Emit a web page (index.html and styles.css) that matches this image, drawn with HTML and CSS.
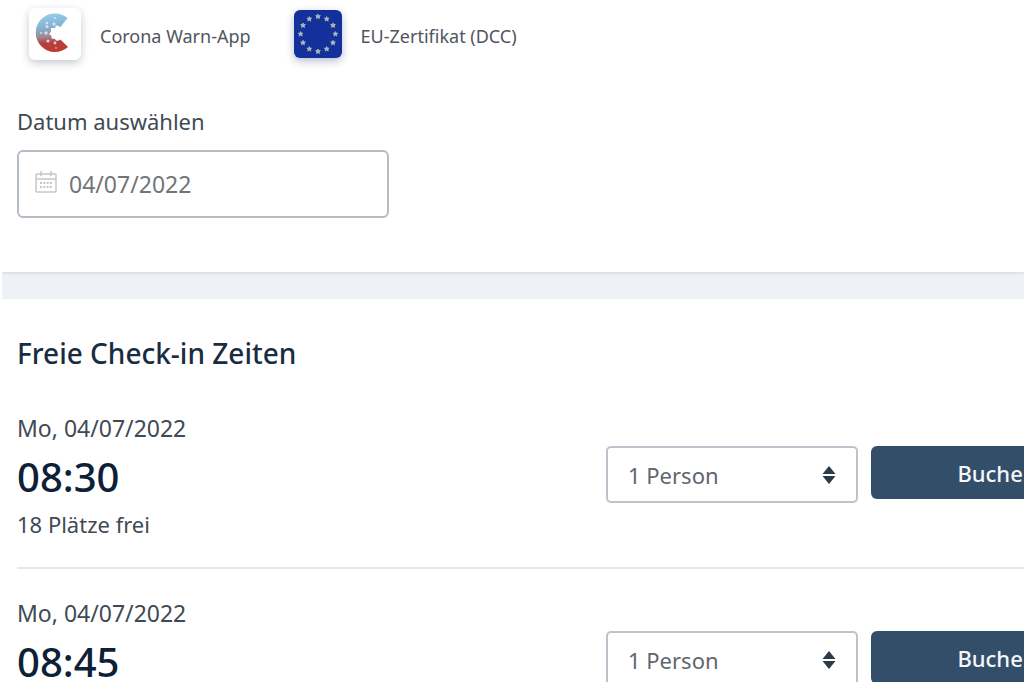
FILE: index.html
```html
<!DOCTYPE html>
<html lang="de">
<head>
<meta charset="utf-8">
<meta name="viewport" content="width=device-width, initial-scale=1">
<title>Freie Check-in Zeiten</title>
<link rel="stylesheet" href="styles.css">
</head>
<body>
<main class="page">
  <section class="panel intro">
    <ul class="features">
      <li class="feature">
        <span class="feature-icon feature-icon-cwa">
          <svg viewBox="0 0 52 52" aria-hidden="true">
            <defs>
              <linearGradient id="cwa" x1="0.300" y1="0" x2="0.400" y2="1">
                <stop offset="0" stop-color="#93cfe8"/>
                <stop offset="0.35" stop-color="#86b4d4"/>
                <stop offset="0.6" stop-color="#a08498"/>
                <stop offset="0.76" stop-color="#b5403c"/>
                <stop offset="1" stop-color="#c0392f"/>
              </linearGradient>
            </defs>
            <path fill="url(#cwa)" d="M38.500 10 A19.300 19.300 0 1 0 39 39 L31.500 31.500 Q30 33 27 32.500 L26 31 L22.500 30.500 L22.500 28 L20 26 L22 23.500 L22 20 L26 20 L27 17.500 Q30 17.500 31.500 19 Z"/>
            <g fill="#e8f2f8" opacity="0.8">
              <circle cx="26" cy="10" r="1"/><circle cx="18" cy="15" r="1.200"/><circle cx="25" cy="16" r="1.600"/>
              <circle cx="12" cy="25" r="1"/><circle cx="18" cy="18.500" r="1.500"/><circle cx="17" cy="25" r="1.700"/><circle cx="19" cy="33" r="1.600"/>
              <circle cx="26" cy="35" r="1.400"/><circle cx="27" cy="40" r="0.800"/>
            </g>
          </svg>
        </span>
        <span class="feature-name">Corona Warn-App</span>
      </li>
      <li class="feature">
        <span class="feature-icon feature-icon-eu">
          <svg viewBox="0 0 48 48" aria-hidden="true">
            <defs><path id="star" fill="#b4bdb8" stroke="#b4bdb8" stroke-width="0.800" stroke-linejoin="round" d="M0-2.400 .7-.8 2.400-.8 1.100.4 1.500 2.100 0 1.100-1.500 2.100-1.100.4-2.400-.8-.7-.8Z"/></defs>
            <use href="#star" x="24" y="6.500"/><use href="#star" x="32.700" y="9"/><use href="#star" x="39" y="15.300"/>
            <use href="#star" x="41.400" y="24"/><use href="#star" x="39" y="32.700"/><use href="#star" x="32.700" y="39"/>
            <use href="#star" x="24" y="41.400"/><use href="#star" x="15.300" y="39"/><use href="#star" x="9" y="32.700"/>
            <use href="#star" x="6.600" y="24"/><use href="#star" x="9" y="15.300"/><use href="#star" x="15.300" y="9"/>
          </svg>
        </span>
        <span class="feature-name">EU-Zertifikat (DCC)</span>
      </li>
    </ul>
    <label class="date-label" for="date">Datum auswählen</label>
    <div class="date-field">
      <svg class="date-icon" viewBox="0 0 22 22" fill="none" stroke="#c6c6c6" stroke-width="1.500" aria-hidden="true">
        <rect x="1" y="3" width="20" height="18" rx="1"/>
        <path d="M1 8H21M6 0V5M16 0V5"/>
        <path d="M5 12H17M5 16H17" stroke-width="2" stroke-dasharray="2 1.300"/>
      </svg>
      <input class="date-input" id="date" type="text" value="04/07/2022">
    </div>
  </section>

  <section class="panel times">
    <h2 class="title">Freie Check-in Zeiten</h2>
    <article class="slot">
      <div class="slot-info">
        <p class="slot-date">Mo, 04/07/2022</p>
        <p class="slot-time">08:30</p>
        <p class="slot-seats">18 Plätze frei</p>
      </div>
      <div class="slot-select">
        <select class="persons" aria-label="Personen"><option>1 Person</option></select>
        <svg class="arrows" viewBox="0 0 14 18" fill="#2b3b48" aria-hidden="true"><path d="M7 0 13.500 8H.5ZM7 18 .5 10H13.500Z"/></svg>
      </div>
      <button class="book" type="button">Buchen</button>
    </article>
    <article class="slot">
      <div class="slot-info">
        <p class="slot-date">Mo, 04/07/2022</p>
        <p class="slot-time">08:45</p>
      </div>
      <div class="slot-select">
        <select class="persons" aria-label="Personen"><option>1 Person</option></select>
        <svg class="arrows" viewBox="0 0 14 18" fill="#2b3b48" aria-hidden="true"><path d="M7 0 13.500 8H.5ZM7 18 .5 10H13.500Z"/></svg>
      </div>
      <button class="book" type="button">Buchen</button>
    </article>
  </section>
</main>
</body>
</html>
```
FILE: styles.css
```css
* { box-sizing: border-box; }

body {
  margin: 0;
  background: #fff;
  color: #404a54;
  font-family: "Noto Sans", "Open Sans", sans-serif;
  font-size: 22px;
}

input, select, button { font: inherit; }

.page {
  overflow-x: clip;
  margin-left: 2px;
  background: #eef1f6;
}

.panel {
  padding-left: 15px;
  background: #fff;
}

.intro {
  margin-bottom: 27px;
  padding-top: 8px;
  padding-bottom: 54px;
  box-shadow: 0 1px 3px #d3d7de;
}

.features {
  display: flex;
  gap: 43px;
  margin: 0 0 45px;
  padding: 0 0 0 12px;
  list-style: none;
}

.feature {
  display: flex;
  align-items: center;
  gap: 19px;
}

.feature-icon {
  display: block;
  border-radius: 6px;
  box-shadow: 0 3px 8px #c9c9cc;
}

.feature-icon svg { display: block; }

.feature-icon-cwa {
  width: 52px;
  height: 52px;
  background: #fff;
}

.feature-icon-eu {
  width: 48px;
  height: 48px;
  background: #14309a;
  box-shadow: 0 3px 8px #b4bbd8;
}

.feature-name {
  padding-top: 4px;
  color: #50565e;
  font-size: 18px;
  line-height: 28px;
}

.date-label {
  display: block;
  margin-bottom: 13px;
  line-height: 32px;
}

.date-field {
  display: flex;
  align-items: center;
  gap: 12px;
  width: 372px;
  height: 68px;
  padding: 0 16px;
  border: 2px solid #b4bcc6;
  border-radius: 6px;
}

.date-icon {
  flex: none;
  width: 22px;
  height: 22px;
  margin-bottom: 5px;
}

.date-input {
  width: 100%;
  min-width: 0;
  padding: 0;
  border: 0;
  outline: 0;
  background: none;
  color: #727578;
  font-size: 23px;
}

.times {
  margin-right: -99px;
  padding-top: 36px;
}

.title {
  margin: 0 0 13px;
  color: #1a2c40;
  font-size: 28px;
  font-weight: 500;
  line-height: 36px;
}

.slot {
  display: flex;
  align-items: flex-start;
  padding: 28px 0;
  border-bottom: 2px solid #e6e8ea;
}

.slot:last-child { border-bottom: 0; }

.slot-info { flex: 1; }

.slot-info p { margin: 0; }

.slot-info .slot-date {
  font-size: 23px;
  line-height: 32px;
}

.slot-info .slot-time {
  color: #0c2038;
  font-size: 40px;
  font-weight: 500;
  line-height: 66px;
}

.slot-seats { line-height: 29px; }

.slot-select {
  position: relative;
  width: 252px;
  margin: 34px 13px 0 0;
}

.persons {
  display: block;
  width: 100%;
  height: 57px;
  padding: 0 20px;
  border: 2px solid #bcc3cb;
  border-radius: 5px;
  appearance: none;
  background: #fff;
  color: #5f666e;
}

.arrows {
  position: absolute;
  top: 20px;
  right: 22px;
  width: 14px;
  height: 18px;
  pointer-events: none;
}

.book {
  width: 252px;
  height: 53px;
  margin-top: 34px;
  border: 0;
  border-radius: 6px;
  background: #334e68;
  color: #f4f7fa;
  font-weight: 500;
}
```
